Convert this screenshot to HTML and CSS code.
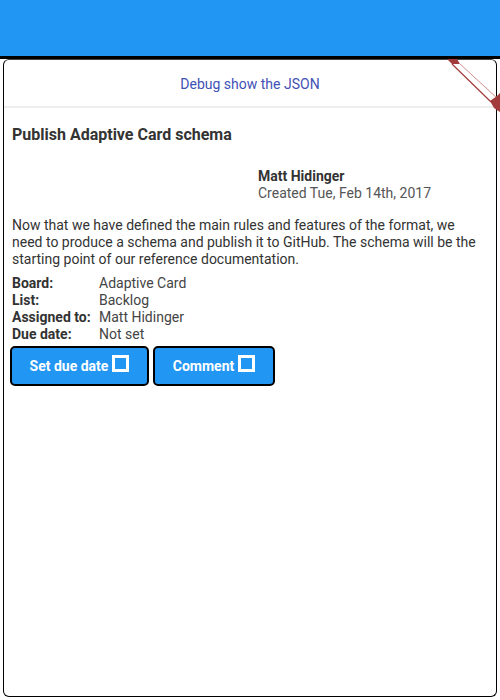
FILE: index.html
```html
<!DOCTYPE html>
<html>
<head>
<meta charset="utf-8">
<link rel="stylesheet" href="styles.css">
</head>
<body>
<div class="appbar"></div>
<div class="card">
  <div class="debug">Debug show the JSON</div>
  <div class="content">
    <div class="title">Publish Adaptive Card schema</div>
    <div class="columns">
      <div class="col-img"></div>
      <div class="col-text">
        <div class="author">Matt Hidinger</div>
        <div class="created">Created Tue, Feb 14th, 2017</div>
      </div>
    </div>
    <p class="desc">Now that we have defined the main rules and features of the format, we need to produce a schema and publish it to GitHub. The schema will be the starting point of our reference documentation.</p>
    <div class="facts">
      <div class="label">Board:</div><div class="value">Adaptive Card</div>
      <div class="label">List:</div><div class="value">Backlog</div>
      <div class="label">Assigned to:</div><div class="value">Matt Hidinger</div>
      <div class="label">Due date:</div><div class="value">Not set</div>
    </div>
    <div class="actions">
      <button class="btn btn-due">Set due date<span class="box"></span></button>
      <button class="btn btn-comment">Comment<span class="box"></span></button>
    </div>
  </div>
</div>
<svg class="ribbon" width="60" height="62" viewBox="0 0 60 62">
  <polygon points="12,10 18,6 58,44 52,48" fill="#ffffff"/>
  <polygon points="7,5 17,5 20,10 12,10" fill="#a23b3b"/>
  <line x1="12" y1="10" x2="51" y2="48" stroke="#a23b3b" stroke-width="1.2"/>
  <line x1="19" y1="9" x2="58" y2="45" stroke="#d08e8e" stroke-width="1"/>
  <polygon points="50,47 57,42 60,39 60,58 54,54" fill="#a23b3b"/>
</svg>
</body>
</html>
```
FILE: styles.css
```css
html, body {
  margin: 0;
  padding: 0;
  background: #ffffff;
  font-family: Roboto, "Liberation Sans", sans-serif;
  color: #333333;
}
body {
  position: relative;
}
.appbar {
  height: 56px;
  background: #2196f3;
  border-bottom: 3px solid #000000;
}
.card {
  margin: 0 3px;
  height: 636px;
  border: 1px solid #000000;
  border-top-color: #444;
  border-radius: 6px;
  overflow: hidden;
}
.debug {
  height: 46px;
  line-height: 48px;
  text-align: center;
  font-size: 14px;
  color: #3f51b5;
  border-bottom: 2px solid #eeeeee;
}
.ribbon {
  position: absolute;
  top: 54px;
  right: 0;
}
.content {
  padding: 17px 8px 0 8px;
}
.title {
  font-size: 16px;
  font-weight: bold;
  line-height: 19px;
  color: #333333;
}
.columns {
  display: flex;
  margin-top: 24px;
}
.col-img {
  width: 246px;
}
.col-text {
  font-size: 14px;
  line-height: 17px;
}
.author {
  font-weight: bold;
}
.created {
  color: #555;
}
.desc {
  margin: 15px 0 0 0;
  font-size: 14px;
  line-height: 17px;
  color: #333333;
}
.facts {
  display: grid;
  grid-template-columns: 87px auto;
  margin-top: 7px;
  font-size: 14px;
  line-height: 17px;
}
.label {
  font-weight: bold;
}
.value {
  color: #444;
}
.actions {
  display: flex;
  gap: 4px;
  margin-top: 3px;
  margin-left: -2px;
}
.btn {
  display: flex;
  align-items: center;
  justify-content: center;
  height: 40px;
  border: 2px solid #000000;
  border-radius: 5px;
  background: #2196f3;
  color: #ffffff;
  font-family: Roboto, "Liberation Sans", sans-serif;
  font-size: 14px;
  font-weight: bold;
  padding: 0;
  gap: 4px;
}
.btn-due { width: 139px; }
.btn-comment { width: 122px; }
.box {
  display: inline-block;
  box-sizing: border-box;
  width: 17px;
  height: 17px;
  border: 3px solid #ffffff;
  margin-bottom: 5px;
}
```
